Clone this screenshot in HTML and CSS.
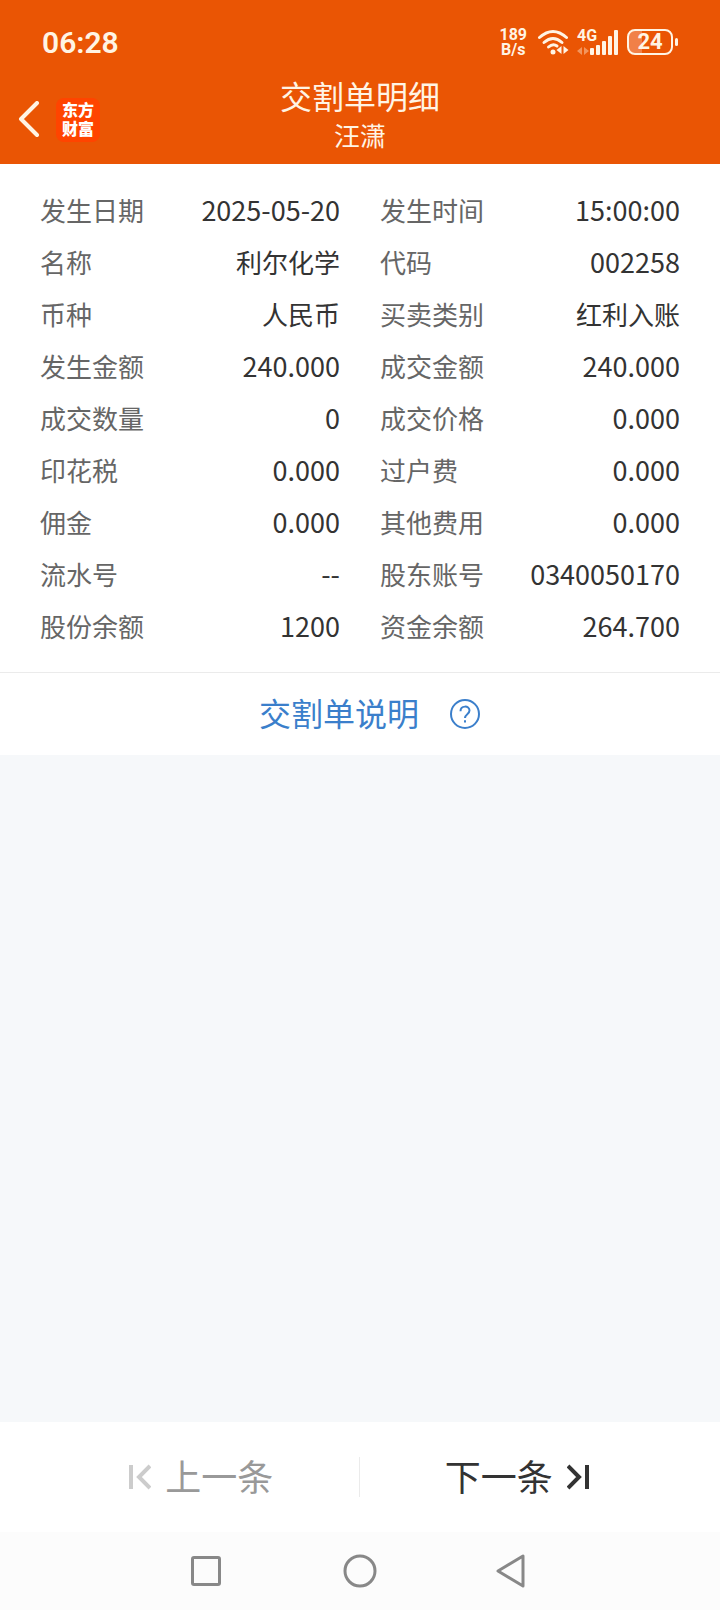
FILE: index.html
```html
<!DOCTYPE html>
<html lang="zh-CN">
<head>
    <meta charset="UTF-8">
    <meta name="viewport" content="width=device-width, initial-scale=1.0">
    <title>交割单明细</title>
    <link rel="stylesheet" href="styles.css">
</head>
<body>
    <header class="header">
        <div class="status-bar">
            <span class="clock">06:28</span>
            <div class="status-icons">
                <div class="net-speed"><span>189</span><span>B/s</span></div>
                <svg class="wifi" width="32" height="28" viewBox="0 0 32 28" fill="none" stroke="currentColor" stroke-width="3" stroke-linecap="round">
                    <path d="M2.500 9.500Q16 -2.500 29.500 9.500"/>
                    <path d="M7 14.500Q16 6.500 25 14.500"/>
                    <path d="M11.500 19Q16 15 20 18"/>
                    <circle cx="16" cy="24" r="2.500" fill="currentColor" stroke="none"/>
                    <path d="M24.500 18v8l-5-4zM26.500 18v8l5-4z" fill="currentColor" stroke="none"/>
                </svg>
                <div class="signal">
                    <span class="signal-type">4G</span>
                    <svg width="42" height="28" viewBox="0 0 42 28" fill="currentColor">
                        <path d="M5 19v8l-5-4zM7 19v8l5-4z" opacity=".4"/>
                        <rect x="13" y="20" width="4" height="7" rx="1"/>
                        <rect x="19" y="17" width="4" height="10" rx="1"/>
                        <rect x="25" y="13" width="4" height="14" rx="1"/>
                        <rect x="31" y="8" width="4" height="19" rx="1"/>
                        <rect x="37" y="2" width="4" height="25" rx="1"/>
                    </svg>
                </div>
                <div class="battery"><span class="battery-body">24</span></div>
            </div>
        </div>
        <div class="title-bar">
            <div class="title-left">
                <button class="back" type="button" aria-label="返回">
                    <svg width="22" height="38" viewBox="0 0 22 38" fill="none" stroke="currentColor" stroke-width="4" stroke-linecap="round" stroke-linejoin="round">
                        <path d="M19 2L3 18l16 16"/>
                    </svg>
                </button>
                <div class="logo"><span>东方</span><span>财富</span></div>
            </div>
            <div class="titles">
                <h1>交割单明细</h1>
                <p>汪潇</p>
            </div>
        </div>
    </header>

    <main class="content">
        <dl class="details">
            <div class="item"><dt>发生日期</dt><dd class="num">2025-05-20</dd></div>
            <div class="item"><dt>发生时间</dt><dd class="num">15:00:00</dd></div>
            <div class="item"><dt>名称</dt><dd>利尔化学</dd></div>
            <div class="item"><dt>代码</dt><dd class="num">002258</dd></div>
            <div class="item"><dt>币种</dt><dd>人民币</dd></div>
            <div class="item"><dt>买卖类别</dt><dd>红利入账</dd></div>
            <div class="item"><dt>发生金额</dt><dd class="num">240.000</dd></div>
            <div class="item"><dt>成交金额</dt><dd class="num">240.000</dd></div>
            <div class="item"><dt>成交数量</dt><dd class="num">0</dd></div>
            <div class="item"><dt>成交价格</dt><dd class="num">0.000</dd></div>
            <div class="item"><dt>印花税</dt><dd class="num">0.000</dd></div>
            <div class="item"><dt>过户费</dt><dd class="num">0.000</dd></div>
            <div class="item"><dt>佣金</dt><dd class="num">0.000</dd></div>
            <div class="item"><dt>其他费用</dt><dd class="num">0.000</dd></div>
            <div class="item"><dt>流水号</dt><dd class="num">--</dd></div>
            <div class="item"><dt>股东账号</dt><dd class="num">0340050170</dd></div>
            <div class="item"><dt>股份余额</dt><dd class="num">1200</dd></div>
            <div class="item"><dt>资金余额</dt><dd class="num">264.700</dd></div>
        </dl>
        <a class="help" href="#">
            <span>交割单说明</span>
            <svg width="32" height="32" viewBox="0 0 32 32" fill="none" stroke="currentColor" stroke-width="2">
                <circle cx="16" cy="16" r="14"/>
                <path d="M11.500 13.200c0-6 9-6 9-.6 0 3.600-4.500 3.600-4.500 7.400"/>
                <path d="M16 22.300v2.200"/>
            </svg>
        </a>
    </main>

    <div class="pager">
        <button class="prev" type="button" disabled>
            <svg width="24" height="26" viewBox="0 0 24 26" fill="none" stroke="currentColor" stroke-width="4">
                <path d="M4 1v24M23 2L12 13l11 11"/>
            </svg>
            <span>上一条</span>
        </button>
        <button class="next" type="button">
            <span>下一条</span>
            <svg width="24" height="26" viewBox="0 0 24 26" fill="none" stroke="currentColor" stroke-width="4">
                <path d="M20 1v24M1 2l11 11L1 24"/>
            </svg>
        </button>
    </div>

    <nav class="nav-bar">
        <button type="button" aria-label="最近任务">
            <svg width="36" height="36" viewBox="0 0 36 36" fill="none" stroke="currentColor" stroke-width="3">
                <rect x="4.500" y="4.500" width="27" height="27" rx="1.500"/>
            </svg>
        </button>
        <button type="button" aria-label="主屏幕">
            <svg width="36" height="36" viewBox="0 0 36 36" fill="none" stroke="currentColor" stroke-width="3">
                <circle cx="18" cy="18" r="15"/>
            </svg>
        </button>
        <button type="button" aria-label="返回上级">
            <svg width="36" height="36" viewBox="0 0 36 36" fill="none" stroke="currentColor" stroke-width="3" stroke-linejoin="round">
                <path d="M27 3v30L2 18z"/>
            </svg>
        </button>
    </nav>
</body>
</html>
```
FILE: styles.css
```css
* {
    box-sizing: border-box;
}
body {
    margin: 0;
    min-height: 100vh;
    display: flex;
    flex-direction: column;
    background-color: #f6f8fa;
    font-family: "Noto Sans CJK SC", sans-serif;
    font-size: 26px;
    color: #333;
}
button {
    padding: 0;
    border: none;
    background: none;
    font: inherit;
    color: inherit;
    cursor: pointer;
}
svg {
    display: block;
    flex: none;
}

/* orange header */
.header {
    background-color: #ea5504;
    color: #fff4e4;
}
.status-bar {
    display: flex;
    align-items: center;
    justify-content: space-between;
    height: 76px;
    padding: 8px 42px 0;
    font-family: Roboto, sans-serif;
}
.clock {
    font-size: 30px;
    font-weight: 600;
}
.status-icons {
    display: flex;
    align-items: center;
    gap: 8px;
    font-weight: 700;
}
.net-speed {
    display: flex;
    flex-direction: column;
    align-items: center;
    margin-right: 2px;
    font-size: 16px;
    line-height: 15px;
}
.signal {
    position: relative;
}
.signal-type {
    position: absolute;
    top: 0;
    left: 0;
    font-size: 16px;
    line-height: 16px;
}
.battery {
    display: flex;
    align-items: center;
}
.battery-body {
    width: 46px;
    border: 2px solid;
    border-radius: 8px;
    background: linear-gradient(to right, #f18048 30%, transparent 30%);
    font-size: 22px;
    line-height: 22px;
    text-align: center;
}
.battery::after {
    content: "";
    width: 3px;
    height: 8px;
    margin-left: 2px;
    border-radius: 2px;
    background-color: currentColor;
}
.title-bar {
    display: grid;
    grid-template-columns: 1fr auto 1fr;
    align-items: center;
    height: 88px;
    padding: 0 18px;
}
.title-left {
    display: flex;
    align-items: center;
    gap: 16px;
}
.logo {
    display: flex;
    flex-direction: column;
    align-items: center;
    width: 44px;
    height: 44px;
    padding-top: 2px;
    border-radius: 8px;
    background-color: #ff4400;
    color: #fff;
    font-size: 16px;
    font-weight: 900;
    line-height: 19px;
}
.titles {
    padding-bottom: 8px;
    text-align: center;
}
.titles h1 {
    margin: 0;
    font-size: 32px;
    font-weight: 400;
    line-height: 38px;
}
.titles p {
    margin: 0;
    line-height: 42px;
}

/* detail list */
.content {
    background-color: #fff;
}
.details {
    display: grid;
    grid-template-columns: 1fr 1fr;
    column-gap: 40px;
    margin: 0;
    padding: 20px 40px;
    border-bottom: 1px solid #ebebeb;
}
.item {
    display: flex;
    justify-content: space-between;
    line-height: 52px;
}
.item dt {
    color: #666;
}
.item dd {
    margin: 0;
}
.item .num {
    font-size: 27px;
}
.help {
    display: flex;
    align-items: center;
    justify-content: center;
    gap: 30px;
    height: 82px;
    padding-left: 20px;
    font-size: 32px;
    line-height: 40px;
    color: #3b7fcb;
    text-decoration: none;
}
.help span {
    padding-bottom: 4px;
}

/* previous / next */
.pager {
    display: flex;
    margin-top: auto;
    padding: 35px 44px 35px 42px;
    background-color: #fff;
    font-size: 36px;
    line-height: 36px;
}
.pager button {
    flex: 1;
    display: flex;
    align-items: center;
    justify-content: center;
    gap: 14px;
}
.pager span {
    padding-bottom: 4px;
}
.pager .prev {
    border-right: 1px solid #ebebeb;
    color: #999;
}
.prev svg {
    color: #ccc;
}

/* system navigation */
.nav-bar {
    display: grid;
    grid-template-columns: repeat(3, 1fr);
    justify-items: center;
    align-items: center;
    height: 78px;
    padding: 0 18%;
    background-color: #fcfcfc;
    color: #888;
}
```
